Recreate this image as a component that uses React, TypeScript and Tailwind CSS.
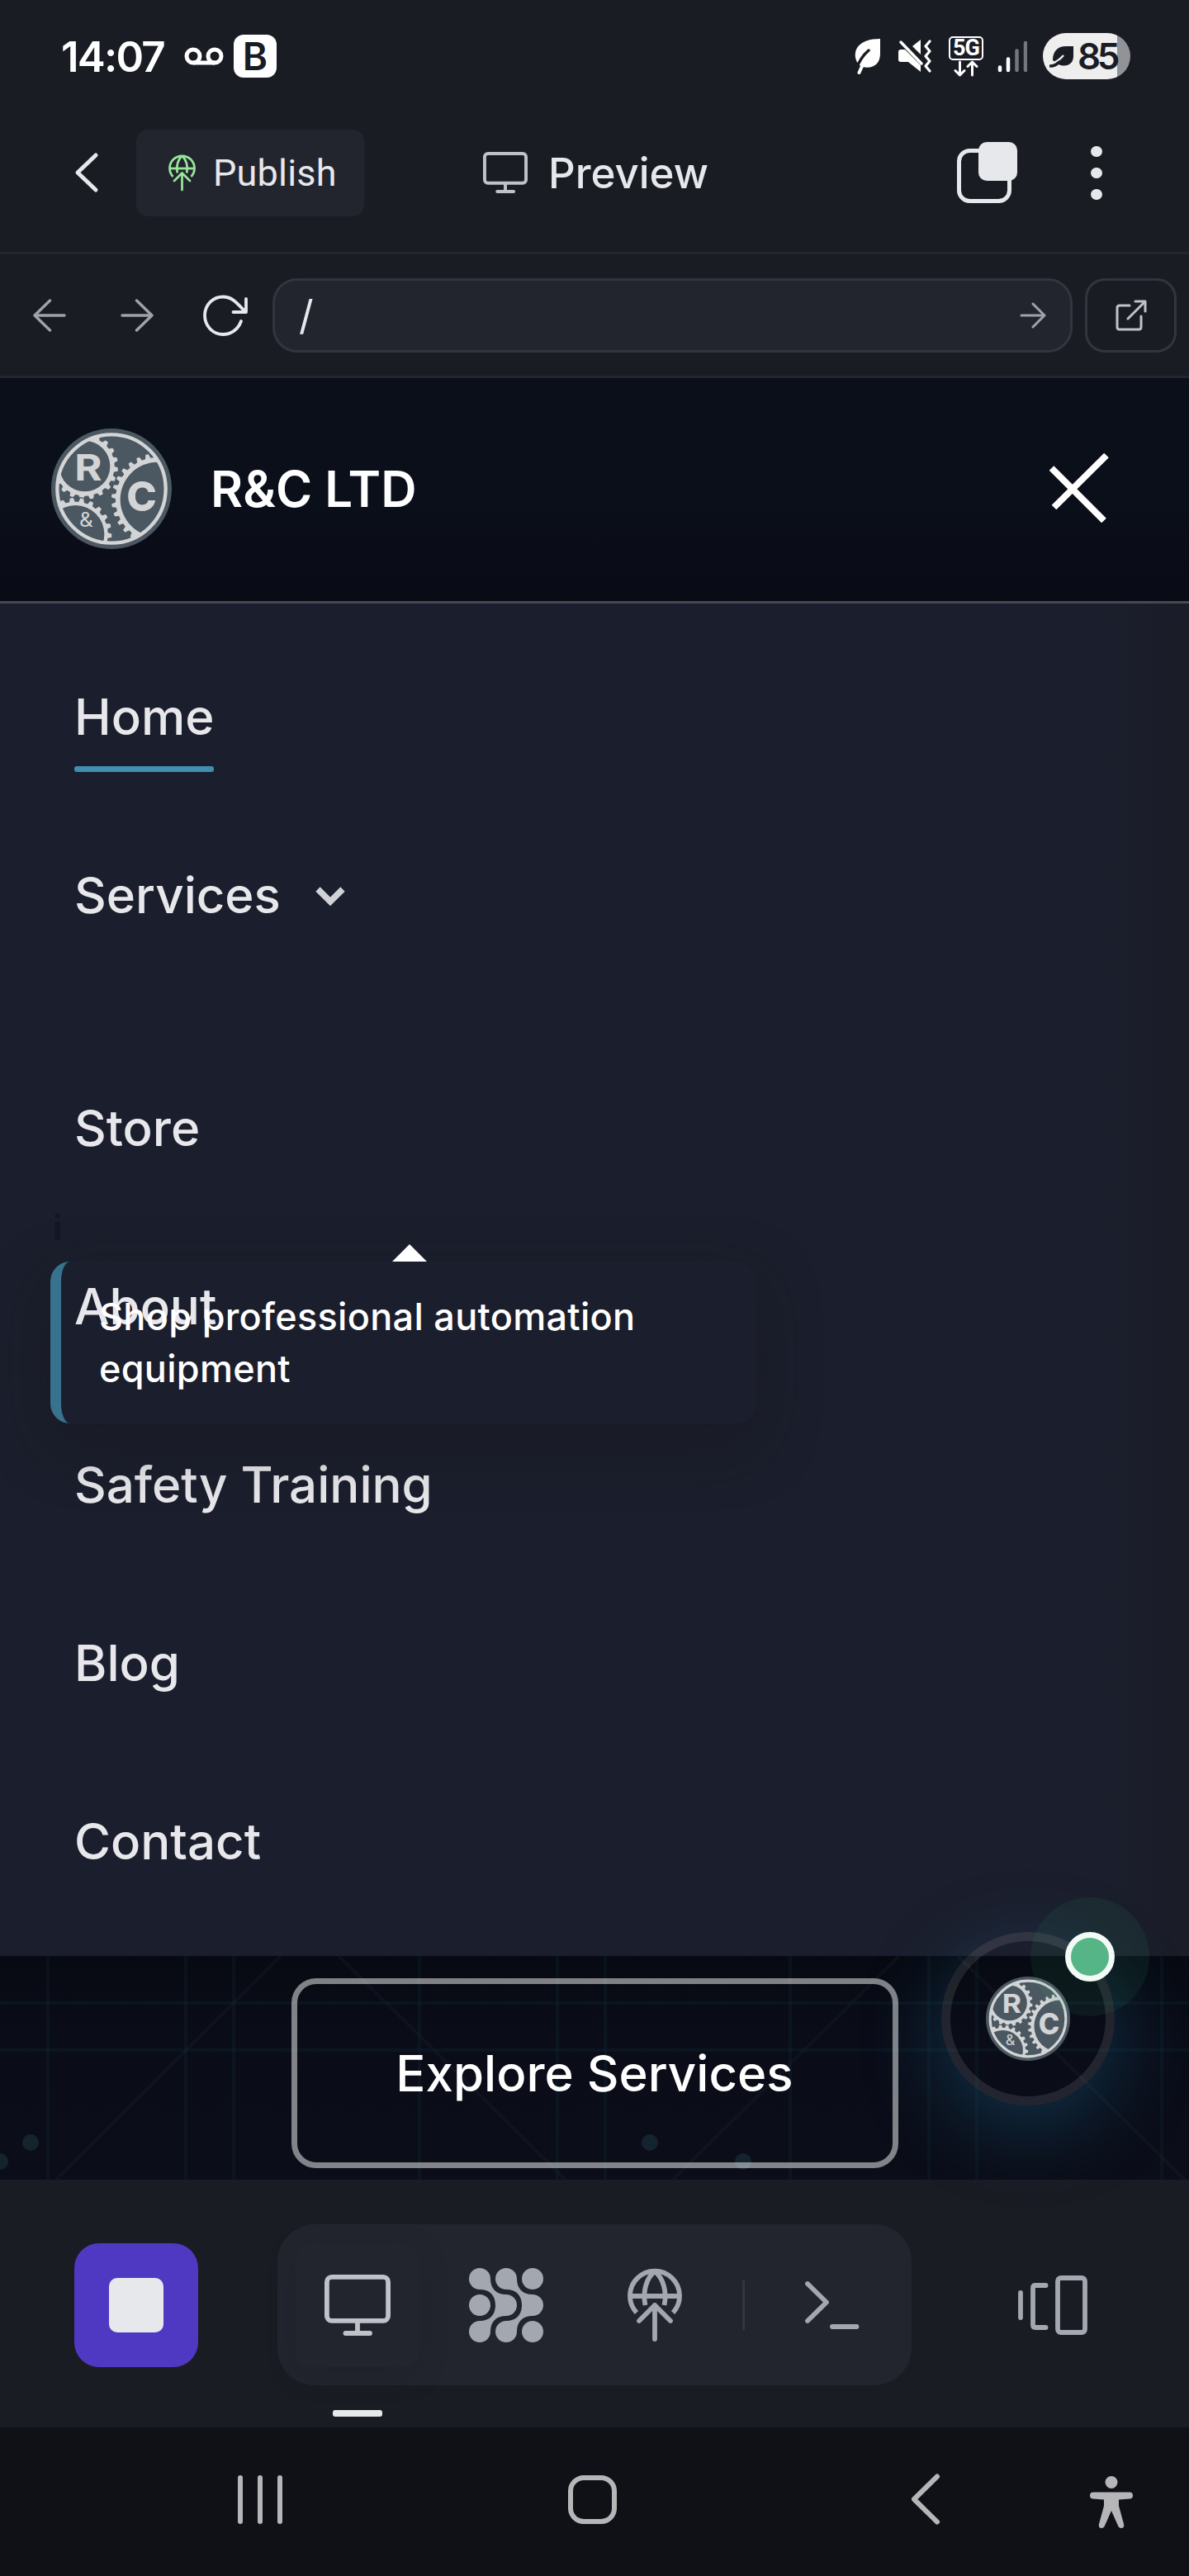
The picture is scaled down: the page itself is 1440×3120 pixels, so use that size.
import React from "react";

/** Outline of a cog wheel with evenly spaced, slightly tapered teeth. */
function gearPath(cx: number, cy: number, root: number, tip: number, teeth: number, phase: number): string {
  const step = (Math.PI * 2) / teeth;
  const pts: string[] = [];
  for (let i = 0; i < teeth; i++) {
    const a = i * step + phase;
    const corners: [number, number][] = [
      [a - step * 0.34, root],
      [a - step * 0.2, tip],
      [a + step * 0.2, tip],
      [a + step * 0.34, root],
    ];
    for (const [t, r] of corners) {
      pts.push(`${(cx + Math.cos(t) * r).toFixed(1)} ${(cy + Math.sin(t) * r).toFixed(1)}`);
    }
  }
  return `M${pts.join("L")}Z`;
}

const R_GEAR = gearPath(146, 163, 110, 123, 20, 0.1);
const AMP_GEAR = gearPath(112, 410, 120, 134, 22, 0.04);
const C_GEAR = gearPath(411, 284, 155, 170, 30, 0.08);

function Logo({ id, className }: { id: string; className: string }) {
  return (
    <svg viewBox="24 26 438 438" className={className}>
      <defs>
        <clipPath id={id}>
          <circle cx="243" cy="245" r="196" />
        </clipPath>
      </defs>
      <circle cx="243" cy="245" r="219" fill="#4b5861" />
      <g clipPath={`url(#${id})`} strokeLinejoin="round">
        <path d={R_GEAR} fill="#d3d4d6" stroke="#4b5861" strokeWidth="4" />
        <path d={AMP_GEAR} fill="#d3d4d6" stroke="#4b5861" strokeWidth="4" />
        <path d={C_GEAR} fill="#d3d4d6" stroke="#4b5861" strokeWidth="4" />
        <circle cx="146" cy="163" r="92" fill="#4b5861" />
        <circle cx="112" cy="410" r="105" fill="#4b5861" />
        <circle cx="411" cy="284" r="136" fill="#4b5861" />
      </g>
      <circle cx="243" cy="245" r="197" fill="none" stroke="#d3d4d6" strokeWidth="13" />
      <g fill="#d3d4d6" fontFamily="Inter, sans-serif">
        <text x="109" y="215" fontSize="133" fontWeight="700" textLength="100" lengthAdjust="spacingAndGlyphs">R</text>
        <text x="298" y="327" fontSize="150" fontWeight="800" textLength="110" lengthAdjust="spacingAndGlyphs">C</text>
        <text x="126" y="384" fontSize="72" fontWeight="400" textLength="50" lengthAdjust="spacingAndGlyphs">&amp;</text>
      </g>
    </svg>
  );
}

function GlobeUp({ className, stroke }: { className: string; stroke: number }) {
  return (
    <svg viewBox="0 0 66 90" className={className} fill="none" stroke="currentColor" strokeWidth={stroke}>
      <path d="M11 54A30 30 0 1 1 55 54" />
      <path d="M4 34H62" />
      <path d="M33 4C23 12 18 28 21.500 45" />
      <path d="M33 4C43 12 48 28 44.500 45" />
      <path d="M33 45V86M14 64L33 45L52 64" strokeLinecap="round" strokeLinejoin="round" />
    </svg>
  );
}

function Monitor({ className }: { className: string }) {
  return (
    <svg viewBox="0 0 80 74" className={className} fill="none" stroke="currentColor" strokeWidth="5.800" strokeLinecap="round">
      <rect x="2.900" y="2.900" width="74.200" height="53" rx="6" />
      <path d="M40 56V71M25.500 71H55" />
    </svg>
  );
}

function StatusBar() {
  return (
    <div className="flex h-[136px] items-center pl-[74px] pr-[71px] text-white">
      <span className="w-[127px] whitespace-nowrap text-[51px] font-semibold leading-none tracking-[-1.8px]">14:07</span>
      <svg viewBox="0 0 48 22" className="ml-[22px] h-[22px] w-[48px]" fill="none" stroke="currentColor" strokeWidth="5">
        <circle cx="11" cy="11" r="8" />
        <circle cx="37" cy="11" r="8" />
        <path d="M11 19H37" />
      </svg>
      <span className="ml-[12px] flex h-[52px] w-[52px] items-center justify-center rounded-[12px] bg-white text-[46px] font-semibold leading-none text-[#1a1c24]">
        B
      </span>

      <div className="ml-auto flex items-center">
        <svg viewBox="0 0 32 43" className="h-[43px] w-[32px]">
          <path d="M31 0V18C31 30 23 37 9 34C0 29 -1 18 3 11C8 3 19 0 31 0Z" fill="currentColor" />
          <path d="M17 14C10 20 5 28 2 37" fill="none" stroke="#1a1c24" strokeWidth="3.500" strokeLinecap="round" />
          <path d="M10 31L5.500 41" stroke="currentColor" strokeWidth="4" strokeLinecap="round" />
        </svg>
        <svg viewBox="0 0 40 40" className="ml-[21px] h-[40px] w-[40px]">
          <path d="M0 15Q0 12 3 12H8L27 31V39L12 27H3Q0 27 0 24Z" fill="currentColor" />
          <path d="M17 8L27 0V18Z" fill="currentColor" />
          <path d="M3 3L28 29" stroke="currentColor" strokeWidth="3.500" strokeLinecap="round" />
          <path d="M38 2L33 8L38 14L33 20L38 26L33 32L38 38" fill="none" stroke="currentColor" strokeWidth="3.200" strokeLinecap="round" strokeLinejoin="round" />
        </svg>
        <div className="ml-[21px] flex w-[42px] flex-col items-center">
          <span className="flex h-[29px] w-[42px] items-center justify-center rounded-[5px] border-2 border-white font-[Roboto] text-[27px] font-bold leading-none tracking-[-1px]">
            5G
          </span>
          <svg viewBox="0 0 30 20" className="h-[20px] w-[30px]" fill="none" stroke="currentColor" strokeWidth="3" strokeLinecap="round" strokeLinejoin="round">
            <path d="M7.500 2V18M2 12.500L7.500 18L13 12.500M22.500 18V2M17 7.500L22.500 2L28 7.500" />
          </svg>
        </div>
        <svg viewBox="0 0 36 40" className="ml-[17px] h-[40px] w-[36px]" strokeWidth="4.500" strokeLinecap="round">
          <path d="M3 33.500V37M13 23.500V37" stroke="#fff" />
          <path d="M23.500 13.500V37M34 4V37" stroke="#75767b" />
        </svg>
        <div className="ml-[19px] flex h-[56px] w-[106px] items-center rounded-full bg-[linear-gradient(90deg,#eeeeef_90px,#929397_90px)] pl-[8px] text-[#1a1c24]">
          <svg viewBox="0 0 30 26" className="mt-[2px] h-[26px] w-[30px]">
            <path d="M29 0V12C29 22 20 26 11 22L4 17C4 6 10 0 20 0Z" fill="currentColor" />
            <path d="M17 11C12 17 7 20 1 21" fill="none" stroke="#eeeeef" strokeWidth="2.500" />
            <path d="M1 24C5 24 9 22 12 19" fill="none" stroke="currentColor" strokeWidth="3.500" strokeLinecap="round" />
          </svg>
          <span className="ml-[4px] text-[44px] font-semibold leading-none tracking-[-4.500px]">85</span>
        </div>
      </div>
    </div>
  );
}

function TitleBar() {
  return (
    <div className="flex h-[172px] items-center border-b-[3px] border-[#23262e] pb-[23px] pl-[90px] text-[#e6e8ec]">
      <svg viewBox="0 0 30 50" className="h-[50px] w-[30px]" fill="none" stroke="currentColor" strokeWidth="5" strokeLinecap="round" strokeLinejoin="round">
        <path d="M26 4L4 25L26 46" />
      </svg>
      <button className="ml-[45px] flex h-[105px] w-[276px] items-center rounded-[14px] bg-[#22252e] pl-[39px]">
        <GlobeUp className="h-[45px] w-[33px] text-[#98e59b]" stroke={5.5} />
        <span className="ml-[21px] font-[Roboto] text-[45px] leading-none tracking-[0.2px]">Publish</span>
      </button>
      <Monitor className="ml-[144px] h-[50px] w-[54px] text-[#bfc2c8]" />
      <h1 className="ml-[25px] text-[51px] font-medium leading-none">Preview</h1>
      <svg viewBox="0 0 74 74" className="ml-auto h-[74px] w-[74px]">
        <rect x="2.500" y="10.500" width="61" height="61" rx="13" fill="none" stroke="currentColor" strokeWidth="5" />
        <rect x="26" y="0" width="47" height="47" rx="10" fill="currentColor" />
      </svg>
      <div className="ml-[88px] mr-[105px] flex flex-col gap-[13px]">
        <span className="h-[13px] w-[14px] rounded-full bg-[#e6e8ec]" />
        <span className="h-[13px] w-[14px] rounded-full bg-[#e6e8ec]" />
        <span className="h-[13px] w-[14px] rounded-full bg-[#e6e8ec]" />
      </div>
    </div>
  );
}

function AddressBar() {
  return (
    <div className="flex h-[150px] items-center border-b-[3px] border-[#23262e] pl-[40px] pr-[15px] text-[#9ea2aa]">
      <svg viewBox="0 0 40 40" className="h-[40px] w-[40px]" fill="none" stroke="currentColor" strokeWidth="3.400" strokeLinecap="round" strokeLinejoin="round">
        <path d="M38 20H2M20.500 2L2 20L20.500 38" />
      </svg>
      <svg viewBox="0 0 40 40" className="ml-[66px] h-[40px] w-[40px]" fill="none" stroke="currentColor" strokeWidth="3.400" strokeLinecap="round" strokeLinejoin="round">
        <path d="M2 20H38M19.500 2L38 20L19.500 38" />
      </svg>
      <svg viewBox="0 0 56 50" className="ml-[59px] h-[50px] w-[56px] text-[#e6e8ec]" fill="none" stroke="currentColor" strokeWidth="3.800" strokeLinecap="round" strokeLinejoin="round">
        <path d="M47 32C43 43 34 48 25 48C12 48 3 37 3 25C3 12 13 2.500 25 2.500C36 2.500 41 9 52 20.500" />
        <path d="M53 5V21H37.500" />
      </svg>
      <div className="ml-[29px] flex h-[90px] w-[969px] items-center justify-between rounded-[30px] border-[3px] border-[#32353f] bg-[#22252e] pl-[29px] pr-[29px]">
        <span className="text-[49px] leading-none text-[#e6e8ec]">/</span>
        <svg viewBox="0 0 32 32" className="h-[32px] w-[32px]" fill="none" stroke="currentColor" strokeWidth="3" strokeLinecap="round" strokeLinejoin="round">
          <path d="M2 16H30M16 2L30 16L16 30" />
        </svg>
      </div>
      <button className="ml-auto flex h-[90px] w-[111px] items-center justify-center rounded-[24px] border-[3px] border-[#32353f] text-[#bfc2c8]">
        <svg viewBox="0 0 38 38" className="h-[38px] w-[38px]" fill="none" stroke="currentColor" strokeWidth="3" strokeLinecap="round" strokeLinejoin="round">
          <path d="M17 7H5Q2 7 2 10V33Q2 36 5 36H28Q31 36 31 33V20M24 2H36V14M36 2L15 23" />
        </svg>
      </button>
    </div>
  );
}

function SiteHeader() {
  return (
    <div className="flex h-[273px] items-center border-b-[3px] border-[#474852] bg-[linear-gradient(180deg,#0b0f1a_0%,#0b0f1a_55%,#090b15_100%)] pb-[2px] pl-[62px] pr-[97px] text-white">
      <Logo id="header-logo" className="h-[146px] w-[146px]" />
      <span className="ml-[47px] whitespace-nowrap text-[60px] font-semibold leading-none">R&amp;C LTD</span>
      <svg viewBox="0 0 74 86" className="mb-[5px] ml-auto h-[86px] w-[74px]" stroke="currentColor" strokeWidth="8">
        <path d="M4.500 20L68 83.500M71 4.500L7.500 67.500" />
      </svg>
    </div>
  );
}

function MenuLink({ children }: { children: React.ReactNode }) {
  return <li className="flex h-[216px] items-center">{children}</li>;
}

function Menu() {
  return (
    <nav className="relative h-[1638px] bg-[linear-gradient(90deg,#1b1e2c_0%,#1b1e2c_92%,#1a1d28_100%)] pl-[90px] pt-[29px] text-[60px] font-medium leading-none text-[#e8e8ec]">
      <ul>
        <MenuLink>
          <span className="relative">
            Home
            <span className="absolute -bottom-[37px] left-0 h-[7px] w-full rounded-[3px] bg-[#418eb0]" />
          </span>
        </MenuLink>
        <MenuLink>
          Services
          <svg viewBox="0 0 36 24" className="ml-[42px] mt-[3px] h-[24px] w-[36px]" fill="none" stroke="#d1d2d7" strokeWidth="7.500">
            <path d="M3 3L18 18L33 3" />
          </svg>
        </MenuLink>
        <li className="h-[66px]" />
        <MenuLink>Store</MenuLink>
        <MenuLink>About</MenuLink>
        <MenuLink>Safety Training</MenuLink>
        <MenuLink>Blog</MenuLink>
        <MenuLink>Contact</MenuLink>
      </ul>

      <div className="absolute left-[61px] top-[797px] h-[196px] w-[855px] rounded-[24px] border-l-[13px] border-[#37728f] pl-[46px] pt-[35px] text-[45px] leading-[63px] tracking-[0.3px] text-white shadow-[0_24px_75px_rgba(22,25,28,0.45)]">
        Shop professional automation
        <br />
        equipment
        <svg viewBox="0 0 42 21" className="absolute -top-[21px] left-[401px] h-[21px] w-[42px]" fill="#fff">
          <path d="M21 0L42 21H0Z" />
        </svg>
      </div>
      <span className="absolute left-[64px] top-[735px] text-[42px] font-bold text-[#141625]">i</span>
    </nav>
  );
}

function CircuitPattern() {
  const verticals = [58, 225, 283, 508, 675, 733, 957, 1125, 1183, 1407];
  return (
    <svg viewBox="0 0 1440 271" className="absolute inset-0 h-[271px] w-[1440px]" stroke="#123240" strokeWidth="4">
      {verticals.map((x) => (
        <path key={x} d={`M${x} 0V271`} strokeOpacity="0.220" />
      ))}
      <path d="M0 57H1440M0 114H1440" strokeOpacity="0.220" />
      <path d="M340 0L68 271M410 0L685 271M1089 0L815 271M1160 0L1435 271" stroke="#1d2530" strokeOpacity="0.280" />
      <g stroke="none" fill="#14242f">
        <circle cx="37" cy="226" r="10" />
        <circle cx="0" cy="249" r="10" />
        <circle cx="787" cy="226" r="10" />
        <circle cx="900" cy="249" r="10" />
      </g>
    </svg>
  );
}

function Hero() {
  return (
    <section className="relative flex h-[271px] justify-center bg-[linear-gradient(180deg,#070a12_0%,#0a0d18_35%,#0b0e19_100%)] pt-[27px]">
      <CircuitPattern />
      <button className="relative flex h-[230px] w-[735px] items-center justify-center rounded-[30px] border-[7px] border-[rgba(255,255,255,0.49)] text-[60px] font-medium leading-none text-white">
        Explore Services
      </button>
      <div className="absolute left-[1140px] top-[-29px] flex h-[210px] w-[210px] items-center justify-center rounded-full border-[11px] border-[rgba(255,255,255,0.1)] shadow-[0_24px_96px_rgba(30,120,165,0.35)]">
        <Logo id="chat-logo" className="h-[102px] w-[102px]" />
        <span className="absolute left-[97px] top-[-53px] h-[144px] w-[144px] rounded-full bg-[rgba(50,170,110,0.09)]" />
        <span className="absolute left-[139px] top-[-11px] h-[60px] w-[60px] rounded-full border-[7px] border-[#f2faf6] bg-[#56b586]" />
      </div>
    </section>
  );
}

function ConnectedDots() {
  const cols = [13, 45, 77];
  return (
    <svg viewBox="0 0 90 90" className="h-[90px] w-[90px]" fill="currentColor">
      {cols.map((x) => cols.map((y) => <circle key={`${x}-${y}`} cx={x} cy={y} r="13" />))}
      {[0, 32].map((dx) => (
        <path
          key={dx}
          transform={`translate(${dx} 0)`}
          d="M26 13C26 25 33 32 45 32L45 58C33 58 26 65 26 77L13 64C25 64 32 57 32 45C32 33 25 26 13 26Z"
        />
      ))}
    </svg>
  );
}

function Toolbar() {
  return (
    <div className="relative flex h-[300px] items-center pl-[90px] pr-[120px] text-[#a3a7b0]">
      <button className="mt-[4px] flex h-[150px] w-[150px] items-center justify-center rounded-[30px] bg-[#4f39c2]">
        <span className="h-[66px] w-[66px] rounded-[10px] bg-[#e6e8ec]" />
      </button>
      <div className="ml-[96px] mt-[3px] flex h-[195px] w-[768px] items-center rounded-[45px] bg-[#22252e] pl-[22px]">
        <div className="relative flex h-[150px] w-[156px] items-center pr-[6px]">
          <span className="flex h-[150px] w-[150px] items-center justify-center rounded-[18px] bg-[#22252e] shadow-[0_10px_30px_rgba(26,28,36,0.35)]">
            <Monitor className="h-[74px] w-[80px] text-[#bfc2c8]" />
          </span>
          <span className="absolute -bottom-[60px] left-[45px] h-[8px] w-[60px] rounded-[3px] bg-[#e6e8ec]" />
        </div>
        <div className="ml-[54px]">
          <ConnectedDots />
        </div>
        <GlobeUp className="ml-[102px] h-[90px] w-[66px]" stroke={5.8} />
        <span className="ml-[73px] h-[60px] w-[3px] bg-[#33363f]" />
        <svg viewBox="0 0 68 60" className="ml-[72px] h-[60px] w-[68px]" fill="none" stroke="currentColor" strokeWidth="5.800" strokeLinecap="round" strokeLinejoin="round">
          <path d="M4 4L27 26.500L4 49M34 56H63.500" />
        </svg>
      </div>
      <svg viewBox="0 0 88 74" className="ml-auto mt-[4px] h-[74px] w-[88px]" fill="none" stroke="currentColor" strokeWidth="5.800" strokeLinecap="round" strokeLinejoin="round">
        <path d="M4 22V52M34.500 13H22Q19 13 19 16V61Q19 64 22 64H34.500" />
        <rect x="49" y="4" width="33" height="66" rx="4" />
      </svg>
    </div>
  );
}

function SystemNav() {
  return (
    <div className="flex h-[180px] items-center bg-[#101116] pb-[6px] pl-[288px] text-[#b6b6b8]">
      <div className="flex gap-[18px]">
        <span className="h-[59px] w-[6px] rounded-full bg-[#b6b6b8]" />
        <span className="h-[59px] w-[6px] rounded-full bg-[#b6b6b8]" />
        <span className="h-[59px] w-[6px] rounded-full bg-[#b6b6b8]" />
      </div>
      <span className="ml-[346px] h-[59px] w-[59px] rounded-[19px] border-[6px] border-[#b6b6b8]" />
      <svg viewBox="0 0 36 62" className="ml-[356px] h-[62px] w-[36px]" fill="none" stroke="currentColor" strokeWidth="6" strokeLinecap="round" strokeLinejoin="round">
        <path d="M32 3.500L4 31L32 58.500" />
      </svg>
      <svg viewBox="0 0 52 64" className="ml-[181px] mt-[8px] h-[64px] w-[52px]" fill="currentColor">
        <circle cx="26" cy="7.500" r="7.500" />
        <path d="M4 19.500H48Q52 19.500 52 23.500T48 27.500L35 28.500V36L41 58Q42 63 38 63Q35 63 34 60L26 42L18 60Q17 63 14 63Q10 63 11 58L17 36V28.500L4 27.500Q0 27.500 0 23.500T4 19.500Z" />
      </svg>
    </div>
  );
}

export default function App() {
  return (
    <main className="flex h-[3120px] w-[1440px] flex-col overflow-hidden bg-[#1a1c24] font-[Inter,sans-serif]">
      <StatusBar />
      <TitleBar />
      <AddressBar />
      <SiteHeader />
      <Menu />
      <Hero />
      <Toolbar />
      <SystemNav />
    </main>
  );
}
